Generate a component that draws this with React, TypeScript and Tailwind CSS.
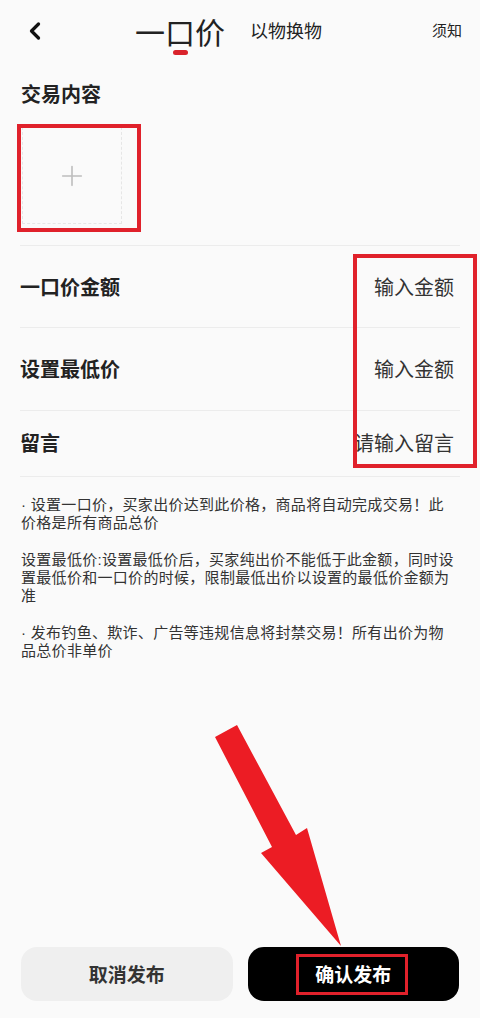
import { ChevronLeft, Plus } from 'lucide-react'

const font = { fontFamily: '"Noto Sans CJK SC", "Noto Sans", sans-serif' }
const notesFont = { fontFamily: '"Liberation Sans", "Noto Sans CJK SC", sans-serif' }

type Row = { label: string; hint: string; h: string }

const rows: Row[] = [
  { label: '一口价金额', hint: '输入金额', h: 'h-[82px]' },
  { label: '设置最低价', hint: '输入金额', h: 'h-[83px]' },
  { label: '留言', hint: '请输入留言', h: 'h-[66px] pb-[2px]' },
]

function Header() {
  return (
    <div className="flex items-center h-[60px] pt-[1px]">
      <ChevronLeft className="ml-[21px] w-[28px] h-[28px] text-[#111]" strokeWidth={2.8} />
      <div className="ml-[86px] flex flex-col items-center relative">
        <span className="text-[30px] leading-[34px] text-[#222]">一口价</span>
        <span className="absolute top-[36px] w-[15px] h-[5px] rounded-full bg-[#d9232b]" />
      </div>
      <span className="ml-[25px] text-[18px] text-[#222]">以物换物</span>
      <span className="ml-auto mr-[18px] text-[15px] text-[#222]">须知</span>
    </div>
  )
}

function Notes() {
  return (
    <div className="px-[21px] pt-[19px] text-[15px] leading-[18.3px] text-[#333] tracking-[0.3px]" style={notesFont}>
      <p>· 设置一口价，买家出价达到此价格，商品将自动完成交易！此价格是所有商品总价</p>
      <p className="mt-[18.3px]">
        设置最低价:设置最低价后，买家纯出价不能低于此金额，同时设置最低价和一口价的时候，限制最低出价以设置的最低价金额为准
      </p>
      <p className="mt-[18.3px]">· 发布钓鱼、欺诈、广告等违规信息将封禁交易！所有出价为物品总价非单价</p>
    </div>
  )
}

export default function App() {
  return (
    <div className="relative w-[480px] h-[1018px] bg-[#fafafa] flex flex-col overflow-hidden" style={font}>
      <Header />
      <div className="flex-1">
        <div className="px-[21px] pt-[21px]">
          <h2 className="text-[20px] leading-[26px] font-bold text-[#222]">交易内容</h2>
          <div className="mt-[20px] ml-[1px] w-[100px] h-[97px] border border-dashed border-[#e6e6e6] flex items-center justify-center">
            <Plus className="w-[32px] h-[32px] text-[#bdbdbd]" strokeWidth={1.2} />
          </div>
        </div>
        <div className="mx-[20px] mt-[21px] border-t border-[#ececec]">
          {rows.map((r) => (
            <div key={r.label} className={`flex items-center justify-between border-b border-[#ececec] ${r.h}`}>
              <span className="text-[20px] font-bold text-[#222]">{r.label}</span>
              <span className="text-[20px] text-[#333] mr-[6px]">{r.hint}</span>
            </div>
          ))}
        </div>
        <Notes />
      </div>
      <div className="flex gap-[15px] px-[21px] pb-[17px]">
        <button className="flex-1 h-[54px] rounded-[16px] bg-[#efefef] text-[19px] font-bold text-[#333]">
          取消发布
        </button>
        <button className="flex-1 h-[54px] rounded-[16px] bg-black text-[19px] font-bold text-white">
          确认发布
        </button>
      </div>

      {/* red annotations */}
      <div className="absolute left-[17px] top-[124px] w-[124px] h-[108px] border-[4px] border-[#e0212b]" />
      <div className="absolute left-[353px] top-[254px] w-[124px] h-[214px] border-[4px] border-[#e0212b]" />
      <div className="absolute left-[296px] top-[954px] w-[112px] h-[41px] border-[3px] border-[#e0212b]" />
      <svg className="absolute left-0 top-0 pointer-events-none" width="480" height="1018">
        <polygon
          points="215,737 237,725 296,835 307,828 341,946 261,853 272,847"
          fill="#ec1c24"
        />
      </svg>
    </div>
  )
}
